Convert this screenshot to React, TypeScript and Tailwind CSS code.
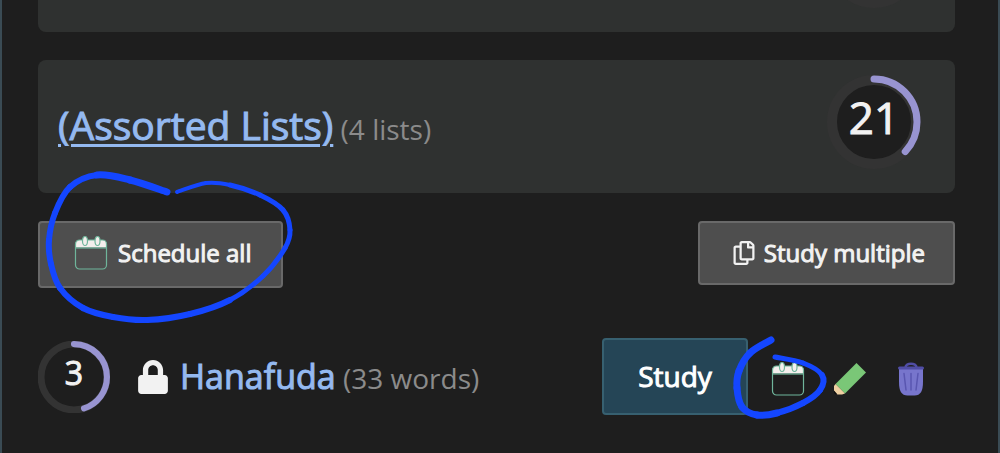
import React from 'react'
import { FaLock, FaRegCopy } from 'react-icons/fa'

interface ProgressRingProps {
  value?: number
  progress: number
  large?: boolean
}

const ProgressRing: React.FC<ProgressRingProps> = ({ value, progress, large = false }) => {
  const radius = 43
  const length = 2 * Math.PI * radius

  return (
    <div className={`relative shrink-0 flex justify-center ${large ? 'size-[94px]' : 'size-[72px]'}`}>
      <svg viewBox="0 0 94 94" className="absolute inset-0 size-full">
        <circle cx="47" cy="47" r={large ? 42 : radius} fill="#1e1e1e" stroke="#333333" strokeWidth={large ? 10 : 9} />
        {progress > 0 && (
          <circle
            cx="47"
            cy="47"
            r={radius}
            fill="none"
            stroke="#9894d1"
            strokeWidth={large ? 7 : 8}
            strokeLinecap="round"
            strokeDasharray={`${length * progress} ${length}`}
            transform="rotate(-90 47 47)"
          />
        )}
      </svg>
      {value !== undefined && (
        <span
          className={`relative text-[#f2f2f2] [-webkit-text-stroke:1px] ${
            large ? 'text-[44px] leading-[84px]' : 'text-[32px] leading-[64px]'
          }`}
        >
          {value}
        </span>
      )}
    </div>
  )
}

const CalendarIcon = () => (
  <svg viewBox="0 0 34 36" className="w-[34px] h-[36px] shrink-0" fill="none" stroke="#6fb59b" strokeWidth="1.2">
    <path d="M1.500 12.500V9a4 4 0 0 1 4-4h23a4 4 0 0 1 4 4v3.500z" fill="#f4efed" stroke="none" />
    <rect x="1.500" y="5" width="31" height="29" rx="4" />
    <path d="M1.500 13h31" />
    <ellipse cx="11" cy="6" rx="2.500" ry="4.500" fill="#f4efed" />
    <ellipse cx="23.500" cy="6" rx="2.500" ry="4.500" fill="#f4efed" />
  </svg>
)

const PencilIcon = () => (
  <svg viewBox="0 0 34 34" className="size-[34px]">
    <path d="M23.500 1 33 10.500 12 31.500 2.500 22z" fill="#7ac777" />
    <path d="M2.500 22 12 31.500 9 32.500H4L1 29v-5z" fill="#efd0a2" />
    <path d="M1 28.500 4.500 32.500H3L1 31z" fill="#0c0c0c" />
  </svg>
)

const TrashIcon = () => (
  <svg viewBox="0 0 28 34" className="w-[28px] h-[34px]">
    <path d="M2 6h24v14c0 9-2.500 13.500-8.500 13.500h-7C4.500 33.500 2 29 2 20z" fill="#7775cc" />
    <path d="M8.500 5.500c0-5 11-5 11 0" fill="none" stroke="#504da5" strokeWidth="2.500" />
    <rect x="1" y="4.500" width="26" height="3" rx="1.500" fill="#504da5" />
    <path d="M7 11.500 9 28M14 11.500V28M21 11.500 19 28" fill="none" stroke="#5956b0" strokeWidth="1.500" strokeLinecap="round" />
  </svg>
)

type PenPoint = [x: number, y: number, width: number]

const scheduleAllLoop: PenPoint[] = [
  [167, 192, 7], [130, 180, 7], [97, 175, 7], [70, 187, 6], [55, 213, 6], [49, 240, 6],
  [51, 264, 6], [60, 288, 6], [83, 308, 6], [113, 317, 6], [147, 320, 6], [190, 314, 6],
  [230, 300, 6], [263, 276, 5], [285, 248, 5], [290, 230, 5], [283, 210, 5], [260, 195, 5],
  [230, 185, 5], [206, 183, 4], [177, 192, 4],
]

const scheduleOneLoop: PenPoint[] = [
  [771, 340, 7], [750, 353, 7], [739, 371, 7], [737, 388, 7], [742, 407, 7], [757, 415, 7],
  [777, 413, 7], [803, 403, 6], [820, 390, 6], [822, 375, 6], [803, 363, 5], [775, 357, 5],
]

// Each segment is drawn on its own, since the pen width changes along the way
const PenStroke: React.FC<{ points: PenPoint[] }> = ({ points }) => (
  <>
    {points.slice(1).map(([x2, y2, width], i) => {
      const [x0, y0] = points[Math.max(i - 1, 0)]
      const [x1, y1] = points[i]
      const [x3, y3] = points[Math.min(i + 2, points.length - 1)]
      return (
        <path
          key={i}
          d={`M${x1} ${y1}C${x1 + (x2 - x0) / 6} ${y1 + (y2 - y0) / 6} ${x2 - (x3 - x1) / 6} ${y2 - (y3 - y1) / 6} ${x2} ${y2}`}
          strokeWidth={width}
        />
      )
    })}
  </>
)

interface FolderCardProps {
  name?: string
  count?: string
  due?: number
  progress?: number
}

const FolderCard: React.FC<FolderCardProps> = ({ name, count, due, progress = 0 }) => (
  <section className="flex items-start rounded-lg bg-[#2f3130] h-[133px] pl-5 pr-[34px] pt-[15px]">
    {name && (
      <h2 className="pt-[22px] text-[28px] leading-[56px] text-[#8b8b8b]">
        <a
          href="#folder"
          className="text-[39px] text-[#94b9f0] underline decoration-[3px] underline-offset-4 [-webkit-text-stroke:1px]"
        >
          {name}
        </a>{' '}
        {count}
      </h2>
    )}
    <div className="ml-auto">
      <ProgressRing value={due} progress={progress} large />
    </div>
  </section>
)

const secondaryButton =
  'flex items-center rounded-[4px] border-2 border-[#696969] bg-[#4e4e4e] text-2xl text-[#f2f2f2] [-webkit-text-stroke:1px]'

export default function App() {
  return (
    <main className="relative overflow-hidden border-x-2 border-[#3a4b54] bg-[#1e1e1e] pl-9 pr-[43px] font-['Open_Sans','Noto_Sans',sans-serif]">
      {/* the first folder is scrolled mostly out of view */}
      <div className="-mt-[101px] flex flex-col gap-7">
        <FolderCard />
        <FolderCard name="(Assorted Lists)" count="(4 lists)" due={21} progress={0.37} />
      </div>

      <div className="mt-7 flex items-start justify-between">
        <button type="button" className={`${secondaryButton} h-[67px] gap-2.5 pl-[34px] pr-[30px] pb-1`}>
          <CalendarIcon />
          Schedule all
        </button>
        <button type="button" className={`${secondaryButton} h-16 gap-2 pl-8 pr-7`}>
          <FaRegCopy className="size-6" />
          Study multiple
        </button>
      </div>

      <div className="mt-[50px] mb-[38px] flex h-[77px] items-center">
        <ProgressRing value={3} progress={0.45} />
        <FaLock className="ml-[26px] size-[34px] text-[#f2f2f2]" />
        <p className="ml-2.5 text-[28px] leading-[56px] text-[#8b8b8b]">
          <a href="#hanafuda" className="text-[34px] text-[#94b9f0] [-webkit-text-stroke:1px]">
            Hanafuda
          </a>{' '}
          (33 words)
        </p>
        <div className="ml-auto mr-[30px] flex items-center">
          <button
            type="button"
            className="h-[77px] w-[146px] rounded-[4px] border-2 border-[#376070] bg-[#254556] pb-0.5 text-[28px] text-white [-webkit-text-stroke:1px]"
          >
            Study
          </button>
          <button type="button" aria-label="Schedule" className="ml-[23px] pt-1">
            <CalendarIcon />
          </button>
          <button type="button" aria-label="Edit" className="ml-7 pt-1">
            <PencilIcon />
          </button>
          <button type="button" aria-label="Delete" className="ml-[30px] pt-1">
            <TrashIcon />
          </button>
        </div>
      </div>

      <svg
        viewBox="0 0 1000 453"
        className="pointer-events-none absolute top-0 -left-0.5 h-[453px] w-[1000px]"
        fill="none"
        stroke="#1446ff"
        strokeLinecap="round"
      >
        <PenStroke points={scheduleAllLoop} />
        <PenStroke points={scheduleOneLoop} />
      </svg>
    </main>
  )
}
